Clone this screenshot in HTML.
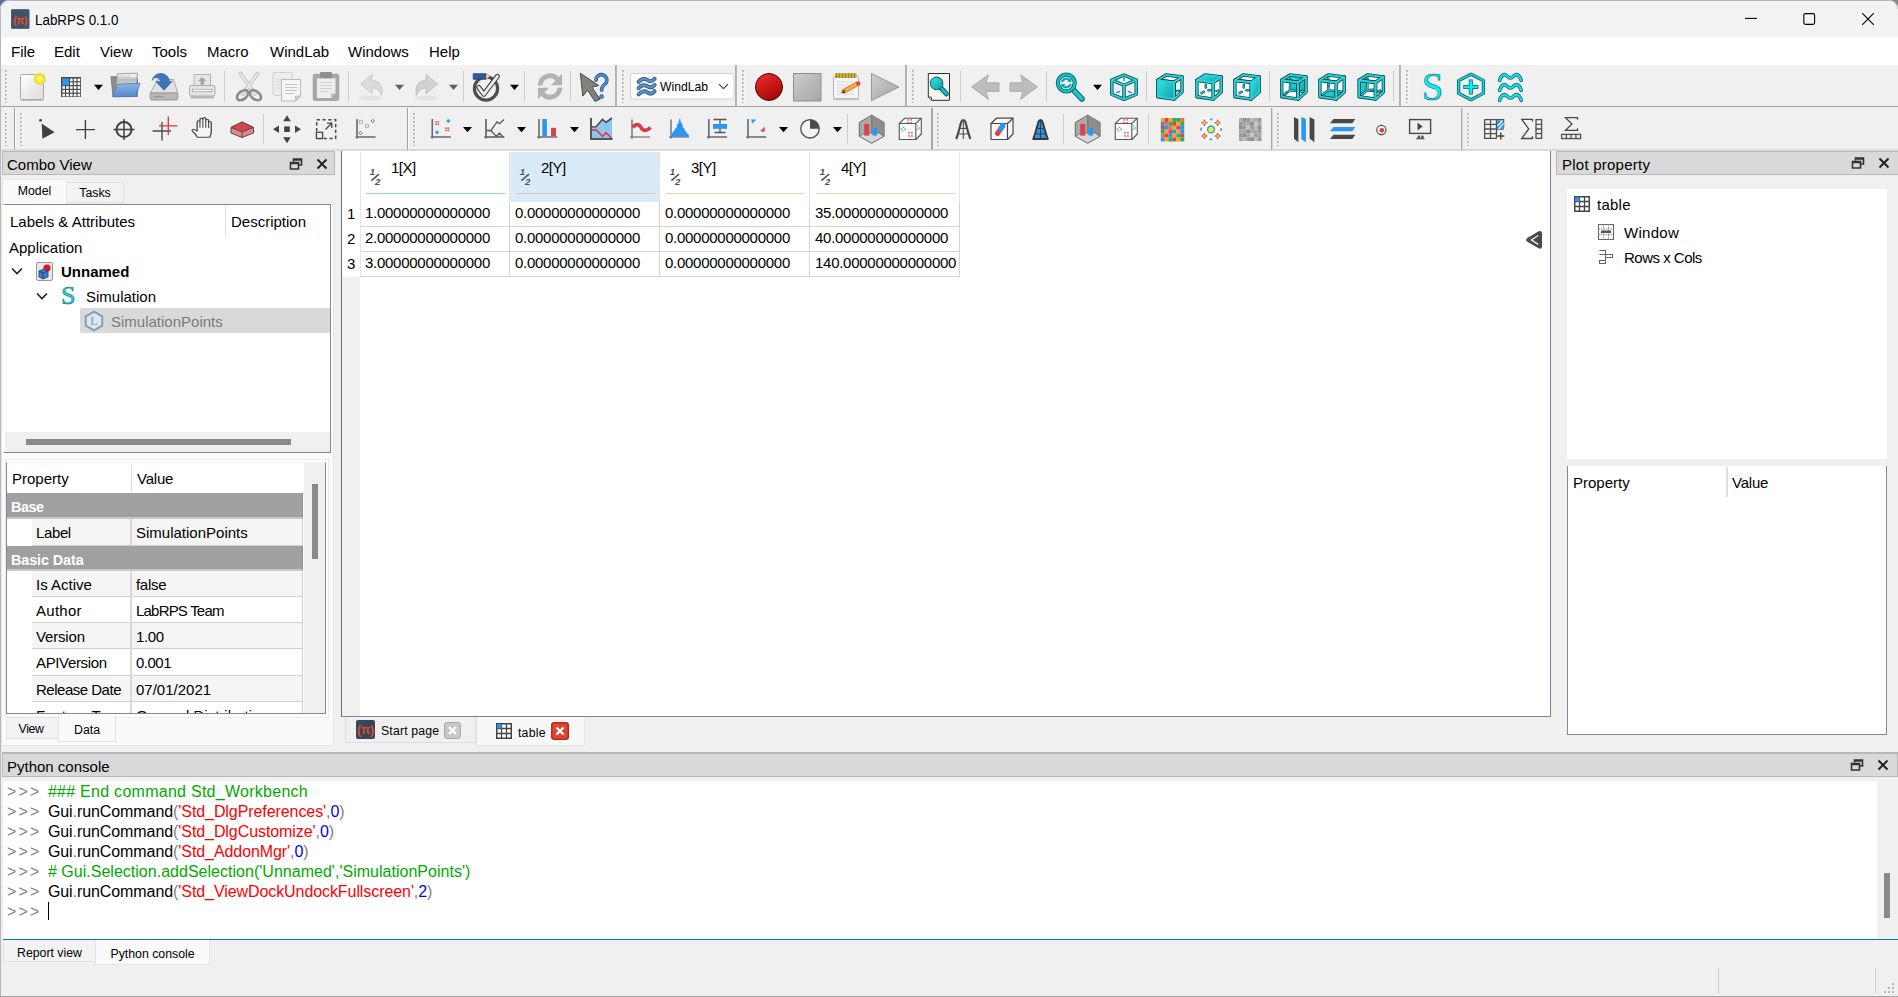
<!DOCTYPE html>
<html lang="en">
<head>
<meta charset="utf-8">
<title>LabRPS 0.1.0</title>
<style>
*{box-sizing:border-box;margin:0;padding:0}
html,body{width:1898px;height:997px;overflow:hidden}
body{position:relative;background:#f0f0f0;font-family:"Liberation Sans",sans-serif;font-size:15px;color:#000;}
.a{position:absolute}
.t{position:absolute;white-space:nowrap;line-height:22px;height:22px}
#title{left:0;top:0;width:1898px;height:38px;background:#f2f3f5;border-bottom:1px solid #f8f9fa}
#menu{left:0;top:38px;width:1898px;height:27px;background:#fff}
#edgeL{left:0;top:8px;width:1px;height:989px;background:#b8b8b8}
#edgeB{left:0;top:996px;width:1898px;height:1px;background:#a8a8a8}
#menu .t{top:3px;font-size:15px}
.hl{position:absolute;height:1px;background:#a0a0a0}
.vl{position:absolute;width:1px;background:#a0a0a0}
.dockt{position:absolute;background:#d9d9d9;border:1px solid #b9b9b9;height:24px}
.dockt .t{left:4px;top:1px}
.frame{position:absolute;background:#fff;border:1px solid #828790}
.tab{position:absolute;font-size:12.300px;text-align:center;line-height:20px}
.tab.sel{background:#fff;border:1px solid #d9d9d9;border-bottom:none}
.tab.un{background:#f3f3f3;border:1px solid #e2e2e2}
.con{position:absolute;left:7px;white-space:pre;font-size:16px;line-height:21px;height:21px;letter-spacing:-.08px}
.num{letter-spacing:-0.27px}
.pr{letter-spacing:2.100px}
.g{color:#808080}.gr{color:#00aa00}.r{color:#ff0000}.b{color:#0000ff}
</style>
</head>
<body>
<!-- TITLE BAR -->
<div id="title" class="a">
  <svg class="a" style="left:11px;top:9px" width="19" height="20" viewBox="0 0 19 20"><rect x="0" y=".3" width="18.300" height="19.400" rx="1" fill="#3e5566"/><rect x=".4" y=".7" width="17.500" height="18.600" rx="1" fill="none" stroke="#4d6475" stroke-width=".8"/><text x="9.200" y="14.600" text-anchor="middle" font-family="Liberation Sans,sans-serif" font-size="11" font-weight="bold" fill="#f24a28" textLength="14" lengthAdjust="spacingAndGlyphs">(π)</text></svg>
  <div class="t" style="left:35px;top:9px;font-size:15.500px;transform-origin:0 50%;transform:scaleX(.865)">LabRPS 0.1.0</div>
  <svg class="a" style="left:1740px;top:8px" width="140" height="22" viewBox="1740 8 140 22" fill="none" stroke="#000" stroke-width="1.100"><path d="M1745 18.400h12"/><rect x="1803.800" y="13.600" width="10.800" height="10.800" rx="1.600"/><path d="M1862.200 13.200l11.600 11.600M1873.800 13.200l-11.600 11.600"/></svg>
  <div class="a" style="left:0;top:0;width:1898px;height:1px;background:#b4b4b4"></div>
  <svg class="a" style="left:0;top:0" width="9" height="9" viewBox="0 0 9 9"><path d="M0 0h9a9 9 0 0 0-9 9z" fill="#5a6f9a"/><path d="M.5 9a8.500 8.500 0 0 1 8.500-8.500" fill="none" stroke="#c8c8cc" stroke-width="1"/></svg>
  <svg class="a" style="left:1889px;top:0" width="9" height="9" viewBox="0 0 9 9"><path d="M9 0h-9a9 9 0 0 1 9 9z" fill="#8a8a8a"/><path d="M8.500 9a8.500 8.500 0 0 0-8.500-8.500" fill="none" stroke="#c8c8cc" stroke-width="1"/></svg>
</div>
<!-- MENU BAR -->
<div id="menu" class="a">
  <div class="t" style="left:11px">File</div>
  <div class="t" style="left:54px">Edit</div>
  <div class="t" style="left:100px">View</div>
  <div class="t" style="left:152px">Tools</div>
  <div class="t" style="left:207px">Macro</div>
  <div class="t" style="left:270px">WindLab</div>
  <div class="t" style="left:348px">Windows</div>
  <div class="t" style="left:429px">Help</div>
</div>
<!-- TOOLBARS -->
<div id="tb1" class="a" style="left:0;top:65px;width:1898px;height:41px"></div>
<div class="hl" style="left:0;top:106px;width:1898px"></div>
<div id="tb2" class="a" style="left:0;top:107px;width:1898px;height:43px"></div>

<!-- TBSVG-START -->
<svg class="a" style="left:0;top:0" width="1898" height="152" viewBox="0 0 1898 152">
<defs>
<linearGradient id="gTeal" x1="0" y1="0" x2="1" y2="1"><stop offset="0" stop-color="#38e2e4"/><stop offset="1" stop-color="#0fa2a8"/></linearGradient>
<linearGradient id="gPage" x1="0" y1="0" x2="1" y2="1"><stop offset="0" stop-color="#ffffff"/><stop offset="1" stop-color="#dcdcdc"/></linearGradient>
<linearGradient id="gRed" x1="0" y1="0" x2=".6" y2="1"><stop offset="0" stop-color="#f23030"/><stop offset="1" stop-color="#a80606"/></linearGradient>
<linearGradient id="gGray" x1="0" y1="0" x2="1" y2="1"><stop offset="0" stop-color="#cdcdcd"/><stop offset="1" stop-color="#a6a6a6"/></linearGradient>
<linearGradient id="gBlue" x1="0" y1="0" x2="0" y2="1"><stop offset="0" stop-color="#8db6e4"/><stop offset="1" stop-color="#5289cc"/></linearGradient>
<linearGradient id="gPaper" x1="0" y1="0" x2="0" y2="1"><stop offset="0" stop-color="#fafafa"/><stop offset=".3" stop-color="#bdbdbd"/><stop offset="1" stop-color="#f2f2f2"/></linearGradient>
<radialGradient id="gGlow"><stop offset="0" stop-color="#fffff0"/><stop offset=".35" stop-color="#f6ee3c"/><stop offset=".8" stop-color="#eadf28" stop-opacity=".85"/><stop offset="1" stop-color="#eadf28" stop-opacity="0"/></radialGradient>
<path id="dd" d="M0 0h9l-4.500 5.300z"/>
<g id="hdl"><path d="M1 0v33" stroke="#b4b4b4" stroke-width="2" stroke-dasharray="2 2"/><path d="M2 1v33" stroke="#fff" stroke-width="1" stroke-dasharray="1 3"/></g>
<g id="tsep"><rect x="-.5" y="0" width="2" height="41" fill="#b2b2b2"/><rect x="1.500" y="0" width="1" height="41" fill="#f8f8f8"/></g>
</defs>
<!-- ===== toolbar 1 ===== -->
<use href="#hdl" x="5" y="70"/>
<!-- new -->
<rect x="20.500" y="74.500" width="23" height="25" rx="1" fill="url(#gPage)" stroke="#a9a9a9"/><path d="M20.500 100.500h23" stroke="#c4c4c4"/>
<circle cx="39.800" cy="79" r="6.800" fill="url(#gGlow)"/>
<!-- grid -->
<rect x="61" y="77" width="20" height="20" fill="#4a4a4a"/>
<g fill="#fff"><rect x="70" y="78.600" width="2.600" height="2.600"/><rect x="73.800" y="78.600" width="2.600" height="2.600"/><rect x="77.600" y="78.600" width="2.600" height="2.600"/><rect x="70" y="82.400" width="2.600" height="2.600"/><rect x="73.800" y="82.400" width="2.600" height="2.600"/><rect x="77.600" y="82.400" width="2.600" height="2.600"/>
<rect x="62.400" y="86.200" width="2.600" height="2.600"/><rect x="66.200" y="86.200" width="2.600" height="2.600"/><rect x="70" y="86.200" width="2.600" height="2.600"/><rect x="73.800" y="86.200" width="2.600" height="2.600"/><rect x="77.600" y="86.200" width="2.600" height="2.600"/>
<rect x="62.400" y="90" width="2.600" height="2.600"/><rect x="66.200" y="90" width="2.600" height="2.600"/><rect x="70" y="90" width="2.600" height="2.600"/><rect x="73.800" y="90" width="2.600" height="2.600"/><rect x="77.600" y="90" width="2.600" height="2.600"/>
<rect x="62.400" y="93.800" width="2.600" height="2.600"/><rect x="66.200" y="93.800" width="2.600" height="2.600"/><rect x="70" y="93.800" width="2.600" height="2.600"/><rect x="73.800" y="93.800" width="2.600" height="2.600"/><rect x="77.600" y="93.800" width="2.600" height="2.600"/></g>
<rect x="62.200" y="78.400" width="6.800" height="6.800" fill="#2a96f0"/>
<use href="#dd" x="94" y="84.800"/>
<!-- open -->
<path d="M111 76.800h6.500l1.500 2h18.500v17.700h-24.500z" fill="#8e8e8e" stroke="#6e6e6e" stroke-width=".8"/>
<path d="M117.500 73.800l20-.6-1.500 19-21.500 2.300z" fill="url(#gPaper)" stroke="#8e8e8e" stroke-width=".8"/><path d="M131 76.200l4.500-.2" stroke="#fff" stroke-width="1"/>
<path d="M116.800 84.300l23.200-1.100-4.300 13.300-23 .4z" fill="url(#gBlue)" stroke="#4a7ab8" stroke-width=".8"/>
<!-- save -->
<path d="M157.800 79.500h15.800l4.200 13.700h-27.600z" fill="#e2e2e2" stroke="#a2a2a2" stroke-width=".9"/>
<rect x="150.200" y="93" width="27.600" height="7" rx="1.400" fill="#b8b8b8" stroke="#909090" stroke-width=".9"/><path d="M153.500 96.700h10" stroke="#9a9a9a" stroke-width="1.600"/>
<path d="M152.200 80.500c.8-5 5.800-8 10.800-6.700 4 1.200 6.300 4.200 6.500 7.600h2.700l-8.200 8.800-8.200-8.800h4.800c-.3-2.400-2.600-4.100-5.100-3.600-1.500.3-2.500 1.200-3.300 2.700z" fill="#3f74b8" stroke="#2f5f9c" stroke-width=".6"/>
<!-- print -->
<rect x="194" y="74.500" width="16.500" height="12" fill="#e6e6e6" stroke="#b0b0b0" stroke-width=".9"/>
<path d="M202.200 77l4.200 4.200h-2.500v3.600h-3.400v-3.600h-2.500z" fill="#a4a4a4"/>
<rect x="189.500" y="85.500" width="25.500" height="10.500" rx="2" fill="#e4e4e4" stroke="#a6a6a6" stroke-width=".9"/>
<rect x="192.500" y="89.300" width="19.500" height="2.400" fill="#fff" stroke="#9a9a9a" stroke-width=".7"/>
<rect x="190.500" y="96" width="23.500" height="2.600" rx="1" fill="#b6b6b6"/>
<rect x="224" y="71" width="1" height="30" fill="#cdcdcd"/>
<!-- cut -->
<path d="M240.500 73.500l14.500 20.500M257.500 73.500l-14.500 20.500" stroke="#bdbdbd" stroke-width="3.600" stroke-linecap="round"/>
<path d="M240.500 73.500l14.500 20.500M257.500 73.500l-14.500 20.500" stroke="#ececec" stroke-width="1.800" stroke-linecap="round"/>
<ellipse cx="242.600" cy="95.200" rx="6.400" ry="4" transform="rotate(-38 242.600 95.200)" fill="none" stroke="#8c8c8c" stroke-width="2.600"/>
<ellipse cx="255.400" cy="95.200" rx="6.400" ry="4" transform="rotate(38 255.400 95.200)" fill="none" stroke="#8c8c8c" stroke-width="2.600"/>
<!-- copy -->
<rect x="273" y="72.500" width="19" height="23" rx="1" fill="#ededed" stroke="#d2d2d2"/>
<path d="M276 79h9M276 82h9M276 85h9M276 88h9" stroke="#dadada"/>
<path d="M281.500 79.500h19v16.500l-5 5h-14z" fill="#f6f6f6" stroke="#b9b9b9"/>
<path d="M285 84.500h12.500M285 87.500h12.500M285 90.500h12.500M285 93.500h9" stroke="#c4c4c4" stroke-width="1.200"/><path d="M300.500 96l-5 5v-5z" fill="#d0d0d0" stroke="#b4b4b4" stroke-width=".7"/>
<!-- paste -->
<rect x="313.300" y="74.300" width="25.400" height="26" rx="1.500" fill="#a9a9a9" stroke="#9b9b9b"/>
<rect x="320" y="72" width="12" height="6" rx="1" fill="#8f8f8f"/>
<path d="M317 78.500h18.500v15l-4.500 4.500h-14z" fill="#eeeeee"/>
<path d="M320 82.500h12M320 85.500h12M320 88.500h12M320 91.500h8" stroke="#cfcfcf" stroke-width="1.200"/><path d="M335.500 93.500l-4.500 4.500v-4.500z" fill="#bdbdbd"/>
<rect x="348" y="71" width="1" height="30" fill="#cdcdcd"/>
<!-- undo / redo -->
<ellipse cx="371" cy="98" rx="12" ry="2.600" fill="#000" opacity=".05"/>
<path d="M360.500 84l11.500-9.500v6c8 0 11.500 6.500 9.500 15-1.500-5-4.500-7.500-9.500-7.500v5.500z" fill="#dbdbdb" stroke="#c6c6c6" stroke-width=".9"/>
<use href="#dd" x="395" y="84.800" fill="#5e5e68"/>
<ellipse cx="427" cy="98" rx="12" ry="2.600" fill="#000" opacity=".05"/>
<path d="M437.500 84l-11.500-9.500v6c-8 0-11.500 6.500-9.500 15 1.500-5 4.500-7.500 9.500-7.500v5.500z" fill="#d2d2d2" stroke="#bcbcbc" stroke-width=".9"/>
<use href="#dd" x="449" y="84.800" fill="#5e5e68"/>
<rect x="463" y="71" width="1" height="30" fill="#cdcdcd"/>
<!-- check -->
<circle cx="486" cy="88.500" r="11.600" fill="none" stroke="#4c4f4c" stroke-width="3.200"/>
<path d="M473.200 73.700h12.800v5.600h-12.800z" fill="#2c5c9c" stroke="#1c3f70" stroke-width=".7"/><path d="M486 73.700l4 2.800-4 2.800z" fill="#e8dcc0" stroke="#777" stroke-width=".5"/>
<path d="M478.800 87.500l5 6.800 13.600-18" fill="none" stroke="#3e3e3e" stroke-width="5" stroke-linecap="round" stroke-linejoin="round"/>
<path d="M478.800 87.500l5 6.800 13.600-18" fill="none" stroke="#ececec" stroke-width="2.800" stroke-linecap="round" stroke-linejoin="round"/>
<use href="#dd" x="510" y="84.800"/>
<rect x="524" y="71" width="1" height="30" fill="#cdcdcd"/>
<!-- refresh -->
<g fill="none" stroke="#b2b2b2" stroke-width="4.800"><path d="M540.200 85.500a9.800 9.800 0 0 1 17-6.500"/><path d="M559.800 87.500a9.800 9.800 0 0 1-17 6.500"/></g>
<path d="M562 73.800v11.400h-11z" fill="#b2b2b2"/><path d="M538 99.200v-11.400h11z" fill="#b2b2b2"/>
<rect x="570" y="71" width="1" height="30" fill="#cdcdcd"/>
<!-- whatsthis -->
<path d="M580.300 73.200l18.400 12.300-6.700 1.700 8 12.100-5 2.200-7.400-11.200-4.800 5.800z" fill="#82827c" stroke="#474743" stroke-width="1"/>
<path d="M596 80.200a5.400 5.400 0 1 1 8.400 4.400c-2.100 1.500-2.800 2.800-2.800 5.600" fill="none" stroke="#245a9a" stroke-width="3.600" stroke-linecap="round"/>
<path d="M596 80.200a5.400 5.400 0 1 1 8.400 4.400c-2.100 1.500-2.800 2.800-2.800 5.600" fill="none" stroke="#4e8ad0" stroke-width="2" stroke-linecap="round"/>
<circle cx="601.600" cy="96.600" r="2" fill="#4e8ad0" stroke="#245a9a" stroke-width=".8"/>
<use href="#tsep" x="615.500" y="65"/>
<use href="#hdl" x="622" y="70"/>
<!-- combo -->
<rect x="630.500" y="73.500" width="103.500" height="25.500" rx="2" fill="#fff" stroke="#d2d2d2"/>
<g fill="none" stroke="#30588e" stroke-width="4" stroke-linecap="round"><path d="M638.600 82.0c2.600-3.600 6.400-3.600 8.600-2 2.400 1.700 5.200 1.600 7.400-1.200"/><path d="M638.600 88.2c2.600-3.600 6.400-3.600 8.600-2 2.400 1.700 5.200 1.600 7.400-1.200"/><path d="M638.600 94.4c2.600-3.600 6.400-3.600 8.600-2 2.400 1.700 5.200 1.600 7.400-1.200"/></g><g fill="none" stroke="#5f8fc6" stroke-width="2.200" stroke-linecap="round"><path d="M638.600 82.0c2.600-3.600 6.400-3.600 8.600-2 2.400 1.700 5.200 1.600 7.400-1.200"/><path d="M638.600 88.2c2.600-3.600 6.400-3.600 8.600-2 2.400 1.700 5.200 1.600 7.400-1.200"/><path d="M638.600 94.4c2.600-3.600 6.400-3.600 8.600-2 2.400 1.700 5.200 1.600 7.400-1.200"/></g>
<text x="660" y="91" font-family="Liberation Sans,sans-serif" font-size="12.200" fill="#000">WindLab</text>
<path d="M719 84.200l4.500 4.500 4.500-4.500" fill="none" stroke="#444" stroke-width="1.200"/>
<use href="#tsep" x="735.500" y="65"/>
<use href="#hdl" x="742" y="70"/>
<!-- record / stop / edit / play -->
<circle cx="769" cy="87" r="13.500" fill="url(#gRed)" stroke="#4a0505" stroke-width="1"/>
<rect x="793.500" y="73.500" width="27.500" height="27.500" fill="url(#gGray)" stroke="#8e8e8e"/>
<rect x="833.500" y="76" width="25" height="23" rx="1.500" fill="#f4f4f4" stroke="#b6b6b6"/><rect x="833" y="98" width="26" height="2.300" rx="1" fill="#c2c2c2"/>
<rect x="835" y="73.200" width="21.500" height="4.800" fill="#c9ad3e"/><path d="M836.500 73v5M839.500 73v5M842.500 73v5M845.500 73v5M848.500 73v5M851.500 73v5M854.500 73v5" stroke="#9c842a" stroke-width="1"/>
<path d="M837 82h17M837 85h17M837 88h17M837 91h17M837 94h17" stroke="#dcdcdc"/>
<path d="M842.500 92l15.500-8.500" stroke="#c97d18" stroke-width="4.600"/><path d="M843.500 91.500l14.500-8" stroke="#f0b04c" stroke-width="2.600"/><path d="M840.600 93.300l3.600-3.500 1.400 2.700z" fill="#5a4020"/><circle cx="858.300" cy="83.400" r="2.200" fill="#e04848"/>
<path d="M871.500 73.500l27.500 13.500-27.500 13.500z" fill="url(#gGray)" stroke="#969696"/>
<use href="#tsep" x="905.500" y="65"/>
<use href="#hdl" x="912" y="70"/>
<!-- zoom doc -->
<path d="M928.300 73.500h21.200v26.800h-18l-3.200-3.200z" fill="#f3f5f0" stroke="#2e2e2e" stroke-width="1"/><path d="M928.300 97.100h3.200v3.200" fill="#d0d0d0" stroke="#2e2e2e" stroke-width=".8"/>
<path d="M940.500 87.500l6 6.500" stroke="#0b5d63" stroke-width="4.800" stroke-linecap="round"/><path d="M940.500 87.500l6 6.500" stroke="#16bcc4" stroke-width="3" stroke-linecap="round"/>
<circle cx="936.600" cy="83.400" r="6.300" fill="url(#gTeal)" stroke="#0b5d63" stroke-width="1"/>
<rect x="960" y="71" width="1" height="30" fill="#cdcdcd"/>
<!-- back / forward -->
<path d="M971.500 86.800l17-12-2.500 8h13v8.600h-13l2.500 8z" fill="#bdbdbd" stroke="#a7a7a7" stroke-width=".9"/>
<path d="M1037.500 86.800l-17-12 2.500 8h-13v8.600h13l-2.500 8z" fill="#bdbdbd" stroke="#a7a7a7" stroke-width=".9"/>
<rect x="1046" y="71" width="1" height="30" fill="#cdcdcd"/>
<!-- zoom refresh -->
<path d="M1073 89.500l9 9.500" stroke="#0b5d63" stroke-width="5.600" stroke-linecap="round"/><path d="M1073 89.500l9 9.500" stroke="#1ccad0" stroke-width="3.600" stroke-linecap="round"/>
<circle cx="1066.300" cy="83" r="8.400" fill="#f4fbfb" stroke="#0b5d63" stroke-width="4.200"/><circle cx="1066.300" cy="83" r="8.400" fill="none" stroke="#16bcc4" stroke-width="2.600"/>
<g fill="none" stroke="#0fa8b0" stroke-width="2.200"><path d="M1062 82.200a4.400 4.400 0 0 1 7.600-2"/><path d="M1070.600 83.800a4.400 4.400 0 0 1-7.600 2"/></g><path d="M1071.400 77.600v4.400h-4.400zM1061.200 88.400v-4.400h4.400z" fill="#0fa8b0"/>
<use href="#dd" x="1093" y="84.800"/>
<!-- cube iso -->
<g fill="none" stroke-linejoin="round">
<path d="M1124 75l12.200 5.100v14.200l-12.200 5.100-12.200-5.100v-14.200zM1111.800 80.100l12.200 5.100 12.200-5.100M1124 85.200v14.200" stroke="#074549" stroke-width="3.400"/>
<path d="M1124 75l12.200 5.100v14.200l-12.200 5.100-12.200-5.100v-14.200zM1111.800 80.100l12.200 5.100 12.200-5.100M1124 85.200v14.200" stroke="#27d3d8" stroke-width="1.800"/>
<path d="M1124 76.500v4M1117 92.500l2.500-1M1131 92.500l-2.500-1" stroke="#12aab2" stroke-width="1.600" stroke-linecap="round"/></g>
<rect x="1146" y="71" width="1" height="30" fill="#cdcdcd"/>
<g stroke-linejoin="round"><polygon points="1157.7,80.3 1166.0,75.0 1182.0,76.9 1182.0,92.0 1174.1,99.1 1157.7,96.7" fill="#fff"/><path d="M1176.8 91.3L1178.8 90.8" stroke="#0a555a" stroke-width="2.500" stroke-linecap="round"/><path d="M1176.8 91.3L1178.8 90.8" stroke="#1cc4cc" stroke-width="1.300" stroke-linecap="round"/><polygon points="1157.7,80.3 1174.1,82.3 1174.1,99.1 1157.7,96.7" fill="url(#gTeal)" stroke="#074549" stroke-width="3.4"/><polygon points="1157.7,80.3 1166.0,75.0 1182.0,76.9 1174.1,82.3" fill="none" stroke="#074549" stroke-width="3.4"/><polygon points="1174.1,82.3 1182.0,76.9 1182.0,92.0 1174.1,99.1" fill="none" stroke="#074549" stroke-width="3.4"/><polygon points="1157.7,80.3 1174.1,82.3 1174.1,99.1 1157.7,96.7" fill="url(#gTeal)" stroke="#27d3d8" stroke-width="1.8"/><polygon points="1157.7,80.3 1166.0,75.0 1182.0,76.9 1174.1,82.3" fill="none" stroke="#27d3d8" stroke-width="1.8"/><polygon points="1174.1,82.3 1182.0,76.9 1182.0,92.0 1174.1,99.1" fill="none" stroke="#27d3d8" stroke-width="1.8"/></g>
<g stroke-linejoin="round"><polygon points="1196.9,80.3 1205.2,75.0 1221.2,76.9 1221.2,92.0 1213.3,99.1 1196.9,96.7" fill="#fff"/><path d="M1205.8 84.8L1205.8 87.5" stroke="#0a555a" stroke-width="2.500" stroke-linecap="round"/><path d="M1205.8 84.8L1205.8 87.5" stroke="#1cc4cc" stroke-width="1.300" stroke-linecap="round"/><path d="M1201.6 93.1L1203.8 91.7" stroke="#0a555a" stroke-width="2.500" stroke-linecap="round"/><path d="M1201.6 93.1L1203.8 91.7" stroke="#1cc4cc" stroke-width="1.300" stroke-linecap="round"/><path d="M1208.5 90.2L1210.4 90.2" stroke="#0a555a" stroke-width="2.500" stroke-linecap="round"/><path d="M1208.5 90.2L1210.4 90.2" stroke="#1cc4cc" stroke-width="1.300" stroke-linecap="round"/><path d="M1216.4 91.1L1218.2 90.6" stroke="#0a555a" stroke-width="2.500" stroke-linecap="round"/><path d="M1216.4 91.1L1218.2 90.6" stroke="#1cc4cc" stroke-width="1.300" stroke-linecap="round"/><polygon points="1196.9,80.3 1213.3,82.3 1213.3,99.1 1196.9,96.7" fill="none" stroke="#074549" stroke-width="3.4"/><polygon points="1196.9,80.3 1205.2,75.0 1221.2,76.9 1213.3,82.3" fill="url(#gTeal)" stroke="#074549" stroke-width="3.4"/><polygon points="1213.3,82.3 1221.2,76.9 1221.2,92.0 1213.3,99.1" fill="none" stroke="#074549" stroke-width="3.4"/><polygon points="1196.9,80.3 1213.3,82.3 1213.3,99.1 1196.9,96.7" fill="none" stroke="#27d3d8" stroke-width="1.8"/><polygon points="1196.9,80.3 1205.2,75.0 1221.2,76.9 1213.3,82.3" fill="url(#gTeal)" stroke="#27d3d8" stroke-width="1.8"/><polygon points="1213.3,82.3 1221.2,76.9 1221.2,92.0 1213.3,99.1" fill="none" stroke="#27d3d8" stroke-width="1.8"/></g>
<g stroke-linejoin="round"><polygon points="1234.9,80.3 1243.2,75.0 1259.2,76.9 1259.2,92.0 1251.3,99.1 1234.9,96.7" fill="#fff"/><path d="M1243.8 84.8L1243.8 87.5" stroke="#0a555a" stroke-width="2.500" stroke-linecap="round"/><path d="M1243.8 84.8L1243.8 87.5" stroke="#1cc4cc" stroke-width="1.300" stroke-linecap="round"/><path d="M1239.6 93.1L1241.8 91.7" stroke="#0a555a" stroke-width="2.500" stroke-linecap="round"/><path d="M1239.6 93.1L1241.8 91.7" stroke="#1cc4cc" stroke-width="1.300" stroke-linecap="round"/><path d="M1246.5 90.2L1248.4 90.2" stroke="#0a555a" stroke-width="2.500" stroke-linecap="round"/><path d="M1246.5 90.2L1248.4 90.2" stroke="#1cc4cc" stroke-width="1.300" stroke-linecap="round"/><polygon points="1234.9,80.3 1251.3,82.3 1251.3,99.1 1234.9,96.7" fill="none" stroke="#074549" stroke-width="3.4"/><polygon points="1234.9,80.3 1243.2,75.0 1259.2,76.9 1251.3,82.3" fill="none" stroke="#074549" stroke-width="3.4"/><polygon points="1251.3,82.3 1259.2,76.9 1259.2,92.0 1251.3,99.1" fill="url(#gTeal)" stroke="#074549" stroke-width="3.4"/><polygon points="1234.9,80.3 1251.3,82.3 1251.3,99.1 1234.9,96.7" fill="none" stroke="#27d3d8" stroke-width="1.8"/><polygon points="1234.9,80.3 1243.2,75.0 1259.2,76.9 1251.3,82.3" fill="none" stroke="#27d3d8" stroke-width="1.8"/><polygon points="1251.3,82.3 1259.2,76.9 1259.2,92.0 1251.3,99.1" fill="url(#gTeal)" stroke="#27d3d8" stroke-width="1.8"/></g>
<rect x="1269" y="71" width="1" height="30" fill="#cdcdcd"/>
<g stroke-linejoin="round"><polygon points="1281.7,80.3 1290.0,75.0 1306.0,76.9 1306.0,92.0 1298.1,99.1 1281.7,96.7" fill="#fff"/><polygon points="1290.0,75.0 1306.0,76.9 1306.0,92.0 1290.0,90.2" fill="url(#gTeal)" stroke="#0b5d63" stroke-width=".7"/><path d="M1290.0 75.0L1290.0 90.2L1281.7 96.7M1290.0 90.2L1306.0 92.0" fill="none" stroke="#0a555a" stroke-width="2.400"/><path d="M1290.0 75.0L1290.0 90.2L1281.7 96.7M1290.0 90.2L1306.0 92.0" fill="none" stroke="#22c8ce" stroke-width="1.200"/><path d="M1284.4 94.4L1286.2 93.1" stroke="#0a555a" stroke-width="2.500" stroke-linecap="round"/><path d="M1284.4 94.4L1286.2 93.1" stroke="#1cc4cc" stroke-width="1.300" stroke-linecap="round"/><polygon points="1281.7,80.3 1298.1,82.3 1298.1,99.1 1281.7,96.7" fill="none" stroke="#074549" stroke-width="3.4"/><polygon points="1281.7,80.3 1290.0,75.0 1306.0,76.9 1298.1,82.3" fill="none" stroke="#074549" stroke-width="3.4"/><polygon points="1298.1,82.3 1306.0,76.9 1306.0,92.0 1298.1,99.1" fill="none" stroke="#074549" stroke-width="3.4"/><polygon points="1281.7,80.3 1298.1,82.3 1298.1,99.1 1281.7,96.7" fill="none" stroke="#27d3d8" stroke-width="1.8"/><polygon points="1281.7,80.3 1290.0,75.0 1306.0,76.9 1298.1,82.3" fill="none" stroke="#27d3d8" stroke-width="1.8"/><polygon points="1298.1,82.3 1306.0,76.9 1306.0,92.0 1298.1,99.1" fill="none" stroke="#27d3d8" stroke-width="1.8"/></g>
<g stroke-linejoin="round"><polygon points="1319.9,80.3 1328.2,75.0 1344.2,76.9 1344.2,92.0 1336.3,99.1 1319.9,96.7" fill="#fff"/><polygon points="1319.9,96.7 1328.2,90.2 1344.2,92.0 1336.3,99.1" fill="url(#gTeal)" stroke="#0b5d63" stroke-width=".7"/><path d="M1328.2 75.0L1328.2 90.2L1319.9 96.7M1328.2 90.2L1344.2 92.0" fill="none" stroke="#0a555a" stroke-width="2.400"/><path d="M1328.2 75.0L1328.2 90.2L1319.9 96.7M1328.2 90.2L1344.2 92.0" fill="none" stroke="#22c8ce" stroke-width="1.200"/><path d="M1328.8 83.0L1328.8 85.7" stroke="#0a555a" stroke-width="2.500" stroke-linecap="round"/><path d="M1328.8 83.0L1328.8 85.7" stroke="#1cc4cc" stroke-width="1.300" stroke-linecap="round"/><polygon points="1319.9,80.3 1336.3,82.3 1336.3,99.1 1319.9,96.7" fill="none" stroke="#074549" stroke-width="3.4"/><polygon points="1319.9,80.3 1328.2,75.0 1344.2,76.9 1336.3,82.3" fill="none" stroke="#074549" stroke-width="3.4"/><polygon points="1336.3,82.3 1344.2,76.9 1344.2,92.0 1336.3,99.1" fill="none" stroke="#074549" stroke-width="3.4"/><polygon points="1319.9,80.3 1336.3,82.3 1336.3,99.1 1319.9,96.7" fill="none" stroke="#27d3d8" stroke-width="1.8"/><polygon points="1319.9,80.3 1328.2,75.0 1344.2,76.9 1336.3,82.3" fill="none" stroke="#27d3d8" stroke-width="1.8"/><polygon points="1336.3,82.3 1344.2,76.9 1344.2,92.0 1336.3,99.1" fill="none" stroke="#27d3d8" stroke-width="1.8"/></g>
<g stroke-linejoin="round"><polygon points="1359.1,80.3 1367.4,75.0 1383.4,76.9 1383.4,92.0 1375.5,99.1 1359.1,96.7" fill="#fff"/><polygon points="1359.1,80.3 1367.4,75.0 1367.4,90.2 1359.1,96.7" fill="url(#gTeal)" stroke="#0b5d63" stroke-width=".7"/><path d="M1367.4 75.0L1367.4 90.2L1359.1 96.7M1367.4 90.2L1383.4 92.0" fill="none" stroke="#0a555a" stroke-width="2.400"/><path d="M1367.4 75.0L1367.4 90.2L1359.1 96.7M1367.4 90.2L1383.4 92.0" fill="none" stroke="#22c8ce" stroke-width="1.200"/><path d="M1370.8 89.7L1373.0 89.7" stroke="#0a555a" stroke-width="2.500" stroke-linecap="round"/><path d="M1370.8 89.7L1373.0 89.7" stroke="#1cc4cc" stroke-width="1.300" stroke-linecap="round"/><path d="M1378.4 91.1L1380.2 90.6" stroke="#0a555a" stroke-width="2.500" stroke-linecap="round"/><path d="M1378.4 91.1L1380.2 90.6" stroke="#1cc4cc" stroke-width="1.300" stroke-linecap="round"/><polygon points="1359.1,80.3 1375.5,82.3 1375.5,99.1 1359.1,96.7" fill="none" stroke="#074549" stroke-width="3.4"/><polygon points="1359.1,80.3 1367.4,75.0 1383.4,76.9 1375.5,82.3" fill="none" stroke="#074549" stroke-width="3.4"/><polygon points="1375.5,82.3 1383.4,76.9 1383.4,92.0 1375.5,99.1" fill="none" stroke="#074549" stroke-width="3.4"/><polygon points="1359.1,80.3 1375.5,82.3 1375.5,99.1 1359.1,96.7" fill="none" stroke="#27d3d8" stroke-width="1.8"/><polygon points="1359.1,80.3 1367.4,75.0 1383.4,76.9 1375.5,82.3" fill="none" stroke="#27d3d8" stroke-width="1.8"/><polygon points="1375.5,82.3 1383.4,76.9 1383.4,92.0 1375.5,99.1" fill="none" stroke="#27d3d8" stroke-width="1.8"/></g>
<rect x="1393" y="71" width="1" height="30" fill="#cdcdcd"/>
<use href="#tsep" x="1399.500" y="65"/>
<use href="#hdl" x="1406" y="70"/>
<text x="1421.800" y="99.800" font-family="Liberation Serif,serif" font-size="39" fill="#02f2fa" stroke="#0b6268" stroke-width=".55">S</text>
<polygon points="1471,74.300 1483.400,80.600 1483.400,93.400 1471,99.700 1458.600,93.400 1458.600,80.600" fill="none" stroke="#0b6268" stroke-width="3.300" stroke-linejoin="round"/>
<polygon points="1471,74.300 1483.400,80.600 1483.400,93.400 1471,99.700 1458.600,93.400 1458.600,80.600" fill="none" stroke="#19d2da" stroke-width="1.700" stroke-linejoin="round"/>
<path d="M1470.800 79.500v15M1463.300 87h15" stroke="#0b6268" stroke-width="4"/><path d="M1470.800 80.200v13.600M1464 87h13.600" stroke="#04eef6" stroke-width="2.600"/>
<path d="M1499.600 80.4C1500.800 76.9 1502.200 74.6 1504.200 74.6C1506.800 74.6 1507.800 78.0 1510.400 78.0C1513 78.0 1514 74.6 1516.600 74.6C1518.600 74.6 1520 76.9 1521.200 80.4" fill="none" stroke="#0b6268" stroke-width="3.600" stroke-linecap="round"/><path d="M1499.600 80.4C1500.800 76.9 1502.200 74.6 1504.200 74.6C1506.800 74.6 1507.800 78.0 1510.400 78.0C1513 78.0 1514 74.6 1516.600 74.6C1518.600 74.6 1520 76.9 1521.200 80.4" fill="none" stroke="#0ee4ec" stroke-width="2.100" stroke-linecap="round"/>
<path d="M1499.600 90.4C1500.800 86.9 1502.200 84.6 1504.200 84.6C1506.800 84.6 1507.800 88.0 1510.400 88.0C1513 88.0 1514 84.6 1516.600 84.6C1518.600 84.6 1520 86.9 1521.200 90.4" fill="none" stroke="#0b6268" stroke-width="3.600" stroke-linecap="round"/><path d="M1499.600 90.4C1500.800 86.9 1502.200 84.6 1504.200 84.6C1506.800 84.6 1507.800 88.0 1510.400 88.0C1513 88.0 1514 84.6 1516.600 84.6C1518.600 84.6 1520 86.9 1521.200 90.4" fill="none" stroke="#0ee4ec" stroke-width="2.100" stroke-linecap="round"/>
<path d="M1499.600 100.4C1500.800 96.9 1502.200 94.6 1504.200 94.6C1506.800 94.6 1507.800 98.0 1510.400 98.0C1513 98.0 1514 94.6 1516.600 94.6C1518.600 94.6 1520 96.9 1521.200 100.4" fill="none" stroke="#0b6268" stroke-width="3.600" stroke-linecap="round"/><path d="M1499.600 100.4C1500.800 96.9 1502.200 94.6 1504.200 94.6C1506.800 94.6 1507.800 98.0 1510.400 98.0C1513 98.0 1514 94.6 1516.600 94.6C1518.600 94.6 1520 96.9 1521.200 100.4" fill="none" stroke="#0ee4ec" stroke-width="2.100" stroke-linecap="round"/>
<!-- ===== toolbar 2 ===== -->
<use href="#hdl" x="5" y="113"/>
<rect x="14" y="108" width="1" height="42" fill="#a0a0a0"/><rect x="15" y="108" width="1" height="42" fill="#fdfdfd"/>
<use href="#hdl" x="20" y="113"/>
<!-- pointer -->
<circle cx="40.500" cy="120.300" r="1.400" fill="#404040"/><path d="M41.700 123.600l12.800 8.600-12.100 6.500z" fill="#404040"/>
<path d="M85.400 120v19M76 129.600h19" stroke="#404040" stroke-width="1.400"/>
<circle cx="124" cy="129.600" r="7.500" fill="none" stroke="#404040" stroke-width="2"/><path d="M124 119v21M113.500 129.600h21" stroke="#404040" stroke-width="1.500"/>
<path d="M162 122v18.500M152.500 131h18.500" stroke="#4a4a4a" stroke-width="1.400"/><path d="M168.300 116.500v18.500M159 125.900h18.500" stroke="#e0343c" stroke-width="1.300"/>
<!-- hand -->
<g transform="translate(192 0) scale(1.220 1) translate(-192 0)"><path d="M196.500 137.200c-1.200-2.300-2.700-4.600-4.200-6.400-.7-.9.400-2 1.500-1.400l2.400 1.600v-9.200c0-1.500 2.300-1.500 2.300 0v-2.300c0-1.500 2.400-1.500 2.400 0v-.8c0-1.500 2.400-1.500 2.400 0v1.600c0-1.500 2.300-1.500 2.300 0v2.300c0-1.400 2.200-1.400 2.200 0v9.200c0 2-.6 3.800-1.200 5.400z" fill="#f4f4f4" stroke="#4a4a4a" stroke-width="1.100" stroke-linejoin="round"/>
<path d="M198.500 121.800v6M200.900 119.500v8.300M203.300 120.300v7.500M205.600 122.600v5.400" stroke="#4a4a4a" stroke-width=".9"/></g>
<!-- red box -->
<path d="M231 127.500l11-5.500 11.500 5.500v5.500l-11.500 4.500-11-4.500z" fill="#e2858a" stroke="#4e4e4e" stroke-width="1"/><path d="M231 127.500l11-5.500 11.500 5.500-11.500 4.300z" fill="#d9434b" stroke="#4e4e4e" stroke-width="1" stroke-linejoin="round"/><path d="M242 131.800v5.700" stroke="#4e4e4e"/>
<rect x="263" y="114" width="1" height="30" fill="#cdcdcd"/>
<!-- move -->
<g fill="#444"><rect x="284.200" y="126.400" width="5.600" height="5.600"/><path d="M287 115.200l3.800 6h-7.600zM287 143.200l3.800-6h-7.600zM273 129.200l6-3.800v7.600zM301 129.200l-6-3.800v7.600z"/></g>
<!-- zoom rect -->
<rect x="316.700" y="119.800" width="19" height="18.600" fill="none" stroke="#484848" stroke-width="1.500" stroke-dasharray="3.200 2.600"/>
<rect x="316.400" y="132.300" width="6.200" height="6.200" fill="#f0f0f0" stroke="#484848" stroke-width="1.300"/>
<path d="M325.500 129.500l6-6M327 123.200h4.800v4.800" fill="none" stroke="#484848" stroke-width="1.300"/>
<!-- scatter gray -->
<path d="M357 119v19.500M355.500 137h20" stroke="#6a6a6a" stroke-width="1.600"/>
<g fill="none" stroke="#6a6a6a" stroke-width=".9"><rect x="359.400" y="120.400" width="3" height="3" stroke-dasharray="1 1"/><rect x="365.400" y="124.400" width="3" height="3" stroke-dasharray="1 1"/><path d="M372.800 119.300l1.700 1.700-1.700 1.700-1.700-1.700zM360.500 131.500l1.700 1.700-1.700 1.700-1.700-1.700z"/></g>
<rect x="407" y="108" width="1" height="42" fill="#a0a0a0"/><rect x="408" y="108" width="1" height="42" fill="#fdfdfd"/>
<use href="#hdl" x="413" y="113"/>
<!-- scatter colour -->
<path d="M432.300 119v19.500M430.800 137h20" stroke="#6a6a6a" stroke-width="1.600"/>
<g fill="#e0404a"><rect x="435.300" y="121.200" width="1.500" height="1.500"/><rect x="437.600" y="121.200" width="1.500" height="1.500"/><rect x="435.300" y="123.500" width="1.500" height="1.500"/><rect x="437.600" y="123.500" width="1.500" height="1.500"/><rect x="445.300" y="127.400" width="1.500" height="1.500"/><rect x="447.600" y="127.400" width="1.500" height="1.500"/><rect x="445.300" y="129.700" width="1.500" height="1.500"/><rect x="447.600" y="129.700" width="1.500" height="1.500"/></g>
<path d="M448.300 118.800l2.100 2.100-2.100 2.100-2.100-2.100zM437 130.200l2.100 2.100-2.100 2.100-2.100-2.100z" fill="#2a9df4"/>
<use href="#dd" x="463" y="127"/>
<!-- line -->
<path d="M486 119v19.500M484.400 137h20" stroke="#5a5a5a" stroke-width="1.600"/>
<path d="M486.500 130.500l4.500-.2 6-8.500 2.500 2 4.500-4.300M486.500 130.500l4.500.3 5.500 5.700 3-3.500 3.500 4" fill="none" stroke="#5a5a5a" stroke-width="1.300" stroke-linejoin="round"/>
<use href="#dd" x="517" y="127"/>
<!-- bar -->
<path d="M539 119v19.500M537.300 137h20" stroke="#6a6a6a" stroke-width="1.600"/>
<rect x="542.300" y="119" width="4.600" height="17.200" fill="#2a96f0"/><rect x="551" y="127.800" width="5" height="8.400" fill="#d9434f"/>
<use href="#dd" x="570" y="127"/>
<!-- area -->
<path d="M591 127l5-.3 6.500-7.300 3.500 3 6-4.400v20.500h-21z" fill="#8cc6f0"/>
<path d="M591 127l5-.3 6.500-7.300 3.500 3 6-4.400" fill="none" stroke="#4a4a4a" stroke-width="1.600"/>
<path d="M591.500 130h5l6 6.500 3.500-3.800 6 6" fill="none" stroke="#e0343c" stroke-width="1.500"/>
<path d="M591 118v21M590 139h22.500" stroke="#555" stroke-width="2"/>
<!-- red wave -->
<path d="M632 119.500v19M630.200 137h20" stroke="#5a5a5a" stroke-width="1.200"/>
<path d="M633 127.500c2.500-3.800 6-3.800 8 0 2.200 3.800 6 3.800 9.500 0" fill="none" stroke="#dc3a48" stroke-width="3.600"/>
<!-- histogram -->
<path d="M671 119.500v19M669.200 137h20" stroke="#5a5a5a" stroke-width="1.200"/>
<path d="M671.800 136.500v-3l1.200-.4.800-2 1-.2.800-2.600 1 .4 1-4.600 1-.6 1.200-4.800 1 4.200 1 .6 1 4.200 1.200.8.800 2.800 1 .2.800 2 1.600.4.200 2.600z" fill="#2a96f0" stroke="#2a96f0" stroke-width=".6" stroke-linejoin="round"/>
<!-- error bars -->
<path d="M708.800 119v19.500M707 137h20" stroke="#6a6a6a" stroke-width="1.600"/>
<path d="M720 119.500v13M713.500 119.500h13M714.500 132.500h11" stroke="#555" stroke-width="1.300"/><rect x="713" y="124" width="14" height="4.800" fill="#2a96f0"/>
<!-- axes triangles -->
<path d="M748 119v19.500M746.300 137h20" stroke="#6a6a6a" stroke-width="1.600"/>
<path d="M751.200 119.200l5.200.6-4.400 4z" fill="#2a9df4"/><path d="M765 126.800l-.6 5.200-4.400-1z" fill="#e0404e"/>
<use href="#dd" x="779" y="127"/>
<!-- pie -->
<circle cx="810" cy="128.800" r="9.200" fill="#f4f4f4" stroke="#4c4c4c" stroke-width="1.300"/><path d="M810 128.800v-9.200a9.200 9.200 0 0 1 9.200 9.200z" fill="#4c4c4c"/>
<use href="#dd" x="833" y="127"/>
<rect x="847" y="114" width="1" height="30" fill="#cdcdcd"/>
<g id="hex3d"><path d="M871.700 115.200l12.400 7.200v13.800l-12.400 7-12.400-7v-13.800z" fill="#a9a9a9" stroke="#5e5e5e" stroke-width=".9"/><path d="M871.700 115.200l12.400 7.200v13.800l-5.400-3h-7z" fill="#8c8c8c"/><path d="M859.300 136.200l5.600-3.200h13.800l5.400 3.200-12.400 7z" fill="#d6d6d6" stroke="#5e5e5e" stroke-width=".7"/><path d="M871.700 115.200v18" stroke="#6a6a6a" stroke-width=".8"/>
<rect x="864.200" y="124" width="5" height="11.600" fill="#d9434f"/><rect x="872.500" y="128" width="4.600" height="7.600" fill="#2a96f0"/></g>
<g id="cubedot"><path d="M899.300 123.500l5.500-5.300h16.500v15.800l-5.500 5.500h-16.500z" fill="#fafafa" stroke="#555" stroke-width="1.100" stroke-linejoin="round"/><path d="M899.300 123.500h16.500v16M915.800 123.500l5.500-5.300" fill="none" stroke="#555" stroke-width="1.100"/>
<g fill="#e0404a"><rect x="907.500" y="119.200" width="1.400" height="1.400"/><rect x="910.500" y="119.200" width="1.400" height="1.400"/><rect x="907.500" y="122" width="1.400" height="1.400"/><rect x="910.500" y="122" width="1.400" height="1.400"/><rect x="908.200" y="132" width="1.500" height="1.500"/><rect x="911.200" y="132" width="1.500" height="1.500"/><rect x="908.200" y="135.200" width="1.500" height="1.500"/><rect x="911.200" y="135.200" width="1.500" height="1.500"/></g>
<g fill="none" stroke="#2a9df4" stroke-width="1.100" stroke-dasharray="1.300 1.100"><circle cx="903.300" cy="129" r="1.800"/><circle cx="917.300" cy="127.800" r="1.800"/></g></g>
<rect x="931" y="108" width="2" height="42" fill="#a6a6a6"/>
<use href="#hdl" x="937" y="113"/>
<!-- A wire -->
<g fill="none" stroke="#4a4a4a"><path d="M956.200 139c2.200-5.500 3.600-12 5-17 .8-2.600 3.400-2.600 4.200 0 1.400 5 2.800 11.500 5 17" stroke-width="2.200"/><path d="M963.300 120.500v18.500M958.300 133.500c3 .9 7 .9 10 0M959.800 128c2.200.7 4.800.7 7 0" stroke-width="1.100"/></g>
<!-- cube pill -->
<path d="M991 123.500l5.500-5.300h16.500v15.800l-5.500 5.500h-16.500z" fill="#fafafa" stroke="#484848" stroke-width="1.200" stroke-linejoin="round"/><path d="M991 123.500h16.500v16M1007.500 123.500l5.500-5.300" fill="none" stroke="#484848" stroke-width="1.200"/>
<path d="M997.500 133.500l5-7.500" stroke="#e0404e" stroke-width="5" stroke-linecap="round"/><path d="M1000.500 129l2.500-3.700" stroke="#2a96f0" stroke-width="5" stroke-linecap="round"/><path d="M998.800 131.600l3.400-5" stroke="#2a96f0" stroke-width="5" stroke-linecap="butt" opacity="0"/>
<!-- A blue -->
<path d="M1033.200 139c2.200-5.500 3.800-12 5.200-17 .8-2.600 3.400-2.600 4.200 0 1.400 5 3 11.500 5.200 17z" fill="#2a96f0" stroke="#3c3c3c" stroke-width="2" stroke-linejoin="round"/>
<path d="M1040.500 120.500v18.500M1035.300 133.500c3 .9 7.400.9 10.400 0M1036.900 128c2.200.7 5 .7 7.200 0" fill="none" stroke="#3c3c3c" stroke-width="1.100"/>
<rect x="1063" y="114" width="1" height="30" fill="#cdcdcd"/>
<use href="#hex3d" x="216" y="0"/>
<use href="#cubedot" x="216" y="0"/>
<rect x="1148" y="114" width="1" height="30" fill="#cdcdcd"/>
<rect x="1160.80" y="118.00" width="3.95" height="3.95" fill="#f5a623"/><rect x="1164.70" y="118.00" width="3.95" height="3.95" fill="#d9434f"/><rect x="1168.60" y="118.00" width="3.95" height="3.95" fill="#f5a623"/><rect x="1172.50" y="118.00" width="3.95" height="3.95" fill="#27ae60"/><rect x="1176.40" y="118.00" width="3.95" height="3.95" fill="#27ae60"/><rect x="1180.30" y="118.00" width="3.95" height="3.95" fill="#f2703a"/><rect x="1160.80" y="121.90" width="3.95" height="3.95" fill="#2a96f0"/><rect x="1164.70" y="121.90" width="3.95" height="3.95" fill="#f2703a"/><rect x="1168.60" y="121.90" width="3.95" height="3.95" fill="#27ae60"/><rect x="1172.50" y="121.90" width="3.95" height="3.95" fill="#d9434f"/><rect x="1176.40" y="121.90" width="3.95" height="3.95" fill="#f5a623"/><rect x="1180.30" y="121.90" width="3.95" height="3.95" fill="#27ae60"/><rect x="1160.80" y="125.80" width="3.95" height="3.95" fill="#d9434f"/><rect x="1164.70" y="125.80" width="3.95" height="3.95" fill="#2a96f0"/><rect x="1168.60" y="125.80" width="3.95" height="3.95" fill="#f2703a"/><rect x="1172.50" y="125.80" width="3.95" height="3.95" fill="#f5a623"/><rect x="1176.40" y="125.80" width="3.95" height="3.95" fill="#d9434f"/><rect x="1180.30" y="125.80" width="3.95" height="3.95" fill="#2a96f0"/><rect x="1160.80" y="129.70" width="3.95" height="3.95" fill="#27ae60"/><rect x="1164.70" y="129.70" width="3.95" height="3.95" fill="#f5a623"/><rect x="1168.60" y="129.70" width="3.95" height="3.95" fill="#d9434f"/><rect x="1172.50" y="129.70" width="3.95" height="3.95" fill="#2a96f0"/><rect x="1176.40" y="129.70" width="3.95" height="3.95" fill="#f5a623"/><rect x="1180.30" y="129.70" width="3.95" height="3.95" fill="#2a96f0"/><rect x="1160.80" y="133.60" width="3.95" height="3.95" fill="#f2703a"/><rect x="1164.70" y="133.60" width="3.95" height="3.95" fill="#d9434f"/><rect x="1168.60" y="133.60" width="3.95" height="3.95" fill="#2a96f0"/><rect x="1172.50" y="133.60" width="3.95" height="3.95" fill="#f5a623"/><rect x="1176.40" y="133.60" width="3.95" height="3.95" fill="#27ae60"/><rect x="1180.30" y="133.60" width="3.95" height="3.95" fill="#d9434f"/><rect x="1160.80" y="137.50" width="3.95" height="3.95" fill="#2a96f0"/><rect x="1164.70" y="137.50" width="3.95" height="3.95" fill="#f5a623"/><rect x="1168.60" y="137.50" width="3.95" height="3.95" fill="#27ae60"/><rect x="1172.50" y="137.50" width="3.95" height="3.95" fill="#d9434f"/><rect x="1176.40" y="137.50" width="3.95" height="3.95" fill="#f5a623"/><rect x="1180.30" y="137.50" width="3.95" height="3.95" fill="#27ae60"/>
<rect x="1200.5" y="118.500" width="21.500" height="22" fill="#f6f6f6"/><circle cx="1211" cy="129.4" r="10" fill="none" stroke="#2a9df4" stroke-width="1.600" stroke-dasharray="3 12.700" stroke-dashoffset="1.500" transform="rotate(-90 1211 129.4)"/><circle cx="1211" cy="129.4" r="3.400" fill="#f0f020" stroke="#2a9df4" stroke-width="1.500"/><path d="M1201.2 122.8h6.400M1204.4 119.6v6.400" stroke="#e0404a" stroke-width="1.100"/><circle cx="1204.4" cy="122.8" r="1.700" fill="#f4e030" stroke="#e0404a" stroke-width=".8"/><path d="M1214.4 122.8h6.400M1217.6 119.6v6.400" stroke="#e0404a" stroke-width="1.100"/><circle cx="1217.6" cy="122.8" r="1.700" fill="#f4e030" stroke="#e0404a" stroke-width=".8"/><path d="M1201.2 136.0h6.400M1204.4 132.8v6.400" stroke="#e0404a" stroke-width="1.100"/><circle cx="1204.4" cy="136.0" r="1.700" fill="#f4e030" stroke="#e0404a" stroke-width=".8"/><path d="M1214.4 136.0h6.400M1217.6 132.8v6.400" stroke="#e0404a" stroke-width="1.100"/><circle cx="1217.6" cy="136.0" r="1.700" fill="#f4e030" stroke="#e0404a" stroke-width=".8"/>
<rect x="1239.00" y="118.00" width="3.78" height="3.88" fill="#b0b0b0"/><rect x="1242.73" y="118.00" width="3.78" height="3.88" fill="#8e8e8e"/><rect x="1246.47" y="118.00" width="3.78" height="3.88" fill="#9a9a9a"/><rect x="1250.20" y="118.00" width="3.78" height="3.88" fill="#bcbcbc"/><rect x="1253.93" y="118.00" width="3.78" height="3.88" fill="#a8a8a8"/><rect x="1257.67" y="118.00" width="3.78" height="3.88" fill="#9a9a9a"/><rect x="1239.00" y="121.83" width="3.78" height="3.88" fill="#9a9a9a"/><rect x="1242.73" y="121.83" width="3.78" height="3.88" fill="#a8a8a8"/><rect x="1246.47" y="121.83" width="3.78" height="3.88" fill="#a8a8a8"/><rect x="1250.20" y="121.83" width="3.78" height="3.88" fill="#8e8e8e"/><rect x="1253.93" y="121.83" width="3.78" height="3.88" fill="#c8c8c8"/><rect x="1257.67" y="121.83" width="3.78" height="3.88" fill="#a8a8a8"/><rect x="1239.00" y="125.67" width="3.78" height="3.88" fill="#8e8e8e"/><rect x="1242.73" y="125.67" width="3.78" height="3.88" fill="#9a9a9a"/><rect x="1246.47" y="125.67" width="3.78" height="3.88" fill="#c8c8c8"/><rect x="1250.20" y="125.67" width="3.78" height="3.88" fill="#9a9a9a"/><rect x="1253.93" y="125.67" width="3.78" height="3.88" fill="#bcbcbc"/><rect x="1257.67" y="125.67" width="3.78" height="3.88" fill="#8e8e8e"/><rect x="1239.00" y="129.50" width="3.78" height="3.88" fill="#a8a8a8"/><rect x="1242.73" y="129.50" width="3.78" height="3.88" fill="#a8a8a8"/><rect x="1246.47" y="129.50" width="3.78" height="3.88" fill="#8e8e8e"/><rect x="1250.20" y="129.50" width="3.78" height="3.88" fill="#a8a8a8"/><rect x="1253.93" y="129.50" width="3.78" height="3.88" fill="#a8a8a8"/><rect x="1257.67" y="129.50" width="3.78" height="3.88" fill="#9a9a9a"/><rect x="1239.00" y="133.34" width="3.78" height="3.88" fill="#9a9a9a"/><rect x="1242.73" y="133.34" width="3.78" height="3.88" fill="#8e8e8e"/><rect x="1246.47" y="133.34" width="3.78" height="3.88" fill="#a8a8a8"/><rect x="1250.20" y="133.34" width="3.78" height="3.88" fill="#c8c8c8"/><rect x="1253.93" y="133.34" width="3.78" height="3.88" fill="#9a9a9a"/><rect x="1257.67" y="133.34" width="3.78" height="3.88" fill="#a8a8a8"/><rect x="1239.00" y="137.17" width="3.78" height="3.88" fill="#a8a8a8"/><rect x="1242.73" y="137.17" width="3.78" height="3.88" fill="#bcbcbc"/><rect x="1246.47" y="137.17" width="3.78" height="3.88" fill="#9a9a9a"/><rect x="1250.20" y="137.17" width="3.78" height="3.88" fill="#8e8e8e"/><rect x="1253.93" y="137.17" width="3.78" height="3.88" fill="#bcbcbc"/><rect x="1257.67" y="137.17" width="3.78" height="3.88" fill="#9a9a9a"/>
<rect x="1271" y="108" width="1" height="42" fill="#a8a8a8"/><rect x="1272" y="108" width="1" height="42" fill="#d8d8d8"/>
<use href="#hdl" x="1277" y="113"/>
<!-- vertical bars -->
<path d="M1294 117l4.400 2.200v23l-4.400-3.400z" fill="#484848"/><path d="M1301.300 117l4.600 2v23.200l-4.600-3.200z" fill="#2a96f0"/><path d="M1309.600 117l4.800 2.600v22.600l-4.800-3.600z" fill="#484848"/>
<!-- horizontal bars -->
<path d="M1333.500 119h21.800l-3 4.300h-22.300z" fill="#484848"/><path d="M1333.500 127h21.800l-3 4.300h-22.300z" fill="#2a96f0"/><path d="M1333.500 134.700h21.800l-3 4.300h-22.300z" fill="#484848"/>
<!-- small circle -->
<circle cx="1381.400" cy="130" r="4.600" fill="#f6f6f6" stroke="#4a4a4a" stroke-width="1.100"/><circle cx="1381.800" cy="130.300" r="2.400" fill="#e0404a"/><path d="M1381.400 124v1.500M1381.400 134.500v1.500" stroke="#9a9a9a" stroke-width=".9"/>
<!-- monitor -->
<rect x="1409.600" y="119.600" width="21" height="13.800" fill="none" stroke="#4a4a4a" stroke-width="1.400"/><path d="M1417.500 122.500l5.200 4-5.200 4z" fill="#4a4a4a"/><path d="M1418 135.500h1.800l.6 3h-3zM1421.500 135.500h1.800l.6 3h-3z" fill="#4a4a4a"/><path d="M1416 138.800h8.500" stroke="#4a4a4a" stroke-width="1"/>
<rect x="1461" y="108" width="1" height="42" fill="#a8a8a8"/><rect x="1462" y="108" width="1" height="42" fill="#d8d8d8"/>
<use href="#hdl" x="1467" y="113"/>
<!-- table+ -->
<g fill="none" stroke="#505050" stroke-width="1.300"><path d="M1484.600 119.600h19v8M1484.600 119.600v18.800h12M1484.600 124.300h12M1484.600 129h19M1484.600 133.700h12M1490.500 119.600v18.800M1496.500 119.600v18.800"/></g>
<rect x="1497" y="120.300" width="6.600" height="8.700" fill="#2a96f0"/><path d="M1497.500 126l5-5.500M1498.500 129l5-5.500" stroke="#e8f4ff" stroke-width="1.300"/>
<path d="M1500.800 132.500v7M1497.300 136h7" stroke="#404040" stroke-width="1.400"/>
<!-- sigma col -->
<path d="M1532.500 121.500v-2.200h-10.800l7 9.600-7 9.600h10.800v-2.200" fill="none" stroke="#484848" stroke-width="1.300" stroke-linejoin="miter"/>
<g fill="none" stroke="#505050" stroke-width="1.300"><rect x="1536" y="119.600" width="5.600" height="18.800"/><path d="M1536 124.300h5.600M1536 129h5.600M1536 133.700h5.600"/></g>
<!-- sigma row -->
<path d="M1577.500 119.800v-2.200h-12l6.500 6.400-6.500 6.400h12v-2.200" fill="none" stroke="#484848" stroke-width="1.300"/>
<g fill="none" stroke="#505050" stroke-width="1.300"><rect x="1561.600" y="134.400" width="19" height="4.200"/><path d="M1566.400 134.400v4.200M1571.100 134.400v4.200M1575.900 134.400v4.200"/></g>
<rect x="0" y="149.500" width="1898" height="1" fill="#c4c4c4"/>
</svg>
<!-- TBSVG-END -->

<!-- COMBO VIEW -->
<div id="combo" class="a" style="left:0;top:150px;width:340px;height:600px">
  <div class="dockt" style="left:2px;top:1px;width:333px"><div class="t" style="top:2px">Combo View</div>
    <svg class="a" style="left:286px;top:6px" width="14" height="12" viewBox="0 0 14 12"><path d="M4.5 3.5V1h8v6H10M1.5 4.5h8v6.5h-8z M1.5 5.5h8 M4.5 2h8" fill="none" stroke="#333" stroke-width="1.6"/></svg>
    <svg class="a" style="left:313px;top:6px" width="12" height="12" viewBox="0 0 12 12"><path d="M1.5 1.5l9 9M10.5 1.5l-9 9" stroke="#222" stroke-width="2" fill="none"/></svg>
  </div>
  <div class="a" style="left:1px;top:54px;width:333px;height:542px;background:#fafafa;border:1px solid #e6e6e6"></div>
  <div class="tab un" style="left:66px;top:32px;width:58px;height:21px;line-height:20px">Tasks</div>
  <div class="frame" style="left:3px;top:54px;width:328px;height:249px;border-left-color:#fff"></div>
  <div class="tab sel" style="left:2px;top:29px;width:65px;height:25px;line-height:23px;background:#fafafa;border-color:#e9e9e9">Model</div>
  <!-- tree header -->
  <div class="t" style="left:10px;top:61px">Labels &amp; Attributes</div>
  <div class="vl" style="left:225px;top:56px;height:30px;background:#e0e0e0"></div>
  <div class="t" style="left:231px;top:61px">Description</div>
  <div class="t" style="left:9px;top:87px">Application</div>
  <svg class="a" style="left:11px;top:117px" width="12" height="8" viewBox="0 0 12 8"><path d="M1 1.5l5 5 5-5" fill="none" stroke="#222" stroke-width="1.6"/></svg>
  <svg class="a" style="left:36px;top:112px" width="17" height="19" viewBox="0 0 17 19"><rect x=".5" y=".5" width="16" height="18" rx="1.5" fill="#e8e8e8" stroke="#9a9a9a"/><circle cx="11" cy="6" r="3.6" fill="#e0141c"/><path d="M3 9l5-2 4 2v6l-5 2-4-2z" fill="#3f7cc4" stroke="#1d3f78" stroke-width=".8"/><path d="M3 9l4 2 5-2M7 11v6" stroke="#1d3f78" stroke-width=".8" fill="none"/></svg>
  <div class="t" style="left:61px;top:111px;font-weight:bold">Unnamed</div>
  <svg class="a" style="left:36px;top:142px" width="12" height="8" viewBox="0 0 12 8"><path d="M1 1.5l5 5 5-5" fill="none" stroke="#222" stroke-width="1.6"/></svg>
  <div class="t" style="left:61px;top:133px;font-family:'Liberation Serif',serif;font-size:26px;line-height:26px;height:26px;color:#1ccdd4;-webkit-text-stroke:.6px #0d7a80">S</div>
  <div class="t" style="left:86px;top:136px">Simulation</div>
  <div class="a" style="left:80px;top:158px;width:250px;height:25px;background:#d9d9d9;border-radius:2px 0 0 2px"></div>
  <svg class="a" style="left:83px;top:160px" width="22" height="22" viewBox="0 0 20 20"><path d="M10 1.5l7.5 4.2v8.6L10 18.5l-7.500-4.200V5.700z" fill="#dfe6ec" stroke="#7ba0bd" stroke-width="1.8"/><text x="10" y="14" font-family="Liberation Serif,serif" font-size="11" text-anchor="middle" fill="#7ba0bd">L</text></svg>
  <div class="t" style="left:111px;top:161px;color:#7a7a7a">SimulationPoints</div>
  <!-- h scrollbar -->
  <div class="a" style="left:5px;top:282px;width:325px;height:20px;background:#f0f0f0"></div>
  <div class="a" style="left:26px;top:289px;width:265px;height:6px;background:#8a8a8a"></div>
  <!-- property panel -->
  <div class="a" style="left:5px;top:309px;width:324px;height:259px;background:#fdfdfd;border:1px solid #ececec"></div>
  <div class="frame" style="left:6px;top:312px;width:320px;height:252px;border-top-color:#f4f4f4"></div>
  <div id="props" class="a" style="left:7px;top:313px;width:318px;height:250px;overflow:hidden">
    <div class="a" style="left:297px;top:0;width:21px;height:250px;background:#f0f0f0"></div>
    <div class="a" style="left:305px;top:21px;width:6px;height:75px;background:#8a8a8a"></div>
    <div class="t" style="left:5px;top:5px">Property</div>
    <div class="vl" style="left:124px;top:1px;height:29px;background:#e0e0e0"></div>
    <div class="t" style="left:130px;top:5px;letter-spacing:-0.2px">Value</div>
    <div class="a" style="left:0;top:30px;width:296px;height:26px;background:#a0a0a0;border-bottom:2px solid #c8c8c8;border-right:1px solid #8f8f8f"><div class="t" style="left:4px;top:3px;color:#fff;font-weight:bold;letter-spacing:-0.47px;font-size:14.400px">Base</div></div>
    <div class="a" style="left:25px;top:56px;width:271px;height:27px;background:#f5f5f5;border-bottom:1px solid #d0d0d0;border-right:1px solid #d0d0d0"><div class="t" style="left:4px;top:3px;letter-spacing:-0.38px">Label</div><div class="a" style="left:98px;top:0;width:2px;height:27px;background:#d8d8d8"></div><div class="t" style="left:104px;top:3px">SimulationPoints</div></div>
    <div class="a" style="left:0;top:83px;width:296px;height:25px;background:#a0a0a0;border-bottom:2px solid #c8c8c8;border-right:1px solid #8f8f8f"><div class="t" style="left:4px;top:3px;color:#fff;font-weight:bold;letter-spacing:-0.1px;font-size:14.400px">Basic Data</div></div>
    <div class="a" style="left:25px;top:108px;width:271px;height:26px;background:#f5f5f5;border-bottom:1px solid #d0d0d0;border-right:1px solid #d0d0d0"><div class="t" style="left:4px;top:3px">Is Active</div><div class="a" style="left:98px;top:0;width:2px;height:26px;background:#d8d8d8"></div><div class="t" style="left:104px;top:3px;letter-spacing:-0.3px">false</div></div>
    <div class="a" style="left:25px;top:134px;width:271px;height:26px;background:#fff;border-bottom:1px solid #d0d0d0;border-right:1px solid #d0d0d0"><div class="t" style="left:4px;top:3px;letter-spacing:0.28px">Author</div><div class="a" style="left:98px;top:0;width:2px;height:26px;background:#d8d8d8"></div><div class="t" style="left:104px;top:3px;letter-spacing:-0.8px">LabRPS Team</div></div>
    <div class="a" style="left:25px;top:160px;width:271px;height:26px;background:#f5f5f5;border-bottom:1px solid #d0d0d0;border-right:1px solid #d0d0d0"><div class="t" style="left:4px;top:3px;letter-spacing:-0.17px">Version</div><div class="a" style="left:98px;top:0;width:2px;height:26px;background:#d8d8d8"></div><div class="t" style="left:104px;top:3px;letter-spacing:-0.4px">1.00</div></div>
    <div class="a" style="left:25px;top:186px;width:271px;height:27px;background:#fff;border-bottom:1px solid #d0d0d0;border-right:1px solid #d0d0d0"><div class="t" style="left:4px;top:3px;letter-spacing:-0.36px">APIVersion</div><div class="a" style="left:98px;top:0;width:2px;height:27px;background:#d8d8d8"></div><div class="t" style="left:104px;top:3px;letter-spacing:-0.5px">0.001</div></div>
    <div class="a" style="left:25px;top:213px;width:271px;height:26px;background:#f5f5f5;border-bottom:1px solid #d0d0d0;border-right:1px solid #d0d0d0"><div class="t" style="left:4px;top:3px;letter-spacing:-0.49px">Release Date</div><div class="a" style="left:98px;top:0;width:2px;height:26px;background:#d8d8d8"></div><div class="t" style="left:104px;top:3px">07/01/2021</div></div>
    <div class="a" style="left:25px;top:239px;width:271px;height:26px;background:#fff;border-bottom:1px solid #d0d0d0;border-right:1px solid #d0d0d0"><div class="t" style="left:4px;top:3px">Feature Type</div><div class="a" style="left:98px;top:0;width:2px;height:26px;background:#d8d8d8"></div><div class="t" style="left:104px;top:3px">General Distribution</div></div>
  </div>
  <div class="tab un" style="left:6px;top:567px;width:53px;height:22px;line-height:23px;letter-spacing:-.4px;padding-right:3px">View</div>
  <div class="tab sel" style="left:58px;top:565px;width:58px;height:27px;line-height:30px;background:#fafafa;border:1px solid #e4e4e4;border-top:none">Data</div>
</div>
<!-- CENTER -->
<div id="center" class="a" style="left:340px;top:150px;width:1215px;height:600px">
  <div class="frame" style="left:1px;top:1px;width:1210px;height:566px;border-color:#7e8390;border-top:none;border-left-color:#666a72"></div>
  <div class="a" style="left:2px;top:127px;width:18px;height:439px;background:#f0f0f0"></div>
  <svg class="a" style="left:29px;top:18px" width="14" height="19" viewBox="0 0 14 19"><text x=".8" y="7.400" font-family="Liberation Sans,sans-serif" font-size="9.500" font-weight="bold" font-style="italic" fill="#505050">1</text><path d="M2.400 12.600L10 6.100" stroke="#505050" stroke-width="1.500"/><text x="6" y="17.100" font-family="Liberation Sans,sans-serif" font-size="9.500" font-weight="bold" font-style="italic" fill="#505050">2</text></svg>
  <div class="t" style="left:51px;top:6.500px;letter-spacing:-0.5px">1[X]</div>
  <div class="hl" style="left:26px;top:43px;width:139px;background:#8fd6c0"></div>
  <div class="vl" style="left:169px;top:2px;height:50px;background:#e5e5e5"></div>
  <div class="a" style="left:170px;top:2px;width:150px;height:50px;background:#d9ebf9"></div>
  <svg class="a" style="left:179px;top:18px" width="14" height="19" viewBox="0 0 14 19"><text x=".8" y="7.400" font-family="Liberation Sans,sans-serif" font-size="9.500" font-weight="bold" font-style="italic" fill="#505050">1</text><path d="M2.400 12.600L10 6.100" stroke="#505050" stroke-width="1.500"/><text x="6" y="17.100" font-family="Liberation Sans,sans-serif" font-size="9.500" font-weight="bold" font-style="italic" fill="#505050">2</text></svg>
  <div class="t" style="left:201px;top:6.500px;letter-spacing:-0.5px">2[Y]</div>
  <div class="hl" style="left:176px;top:43px;width:139px;background:#d8c4b4"></div>
  <div class="vl" style="left:319px;top:2px;height:50px;background:#e5e5e5"></div>
  <svg class="a" style="left:329px;top:18px" width="14" height="19" viewBox="0 0 14 19"><text x=".8" y="7.400" font-family="Liberation Sans,sans-serif" font-size="9.500" font-weight="bold" font-style="italic" fill="#505050">1</text><path d="M2.400 12.600L10 6.100" stroke="#505050" stroke-width="1.500"/><text x="6" y="17.100" font-family="Liberation Sans,sans-serif" font-size="9.500" font-weight="bold" font-style="italic" fill="#505050">2</text></svg>
  <div class="t" style="left:351px;top:6.500px;letter-spacing:-0.5px">3[Y]</div>
  <div class="hl" style="left:326px;top:43px;width:139px;background:#f5d2b3"></div>
  <div class="vl" style="left:469px;top:2px;height:50px;background:#e5e5e5"></div>
  <svg class="a" style="left:479px;top:18px" width="14" height="19" viewBox="0 0 14 19"><text x=".8" y="7.400" font-family="Liberation Sans,sans-serif" font-size="9.500" font-weight="bold" font-style="italic" fill="#505050">1</text><path d="M2.400 12.600L10 6.100" stroke="#505050" stroke-width="1.500"/><text x="6" y="17.100" font-family="Liberation Sans,sans-serif" font-size="9.500" font-weight="bold" font-style="italic" fill="#505050">2</text></svg>
  <div class="t" style="left:501px;top:6.500px;letter-spacing:-0.5px">4[Y]</div>
  <div class="hl" style="left:476px;top:43px;width:139px;background:#f5d2b3"></div>
  <div class="vl" style="left:619px;top:2px;height:50px;background:#e5e5e5"></div>
  <div class="t" style="left:7px;top:53px">1</div>
  <div class="a" style="left:20px;top:52px;width:150px;height:25px;border-right:1px solid #d4d4d4;border-bottom:1px solid #d4d4d4"><div class="t num" style="left:5px;top:0">1.00000000000000</div></div>
  <div class="a" style="left:170px;top:52px;width:150px;height:25px;border-right:1px solid #d4d4d4;border-bottom:1px solid #d4d4d4"><div class="t num" style="left:5px;top:0">0.00000000000000</div></div>
  <div class="a" style="left:320px;top:52px;width:150px;height:25px;border-right:1px solid #d4d4d4;border-bottom:1px solid #d4d4d4"><div class="t num" style="left:5px;top:0">0.00000000000000</div></div>
  <div class="a" style="left:470px;top:52px;width:150px;height:25px;border-right:1px solid #d4d4d4;border-bottom:1px solid #d4d4d4"><div class="t num" style="left:5px;top:0">35.00000000000000</div></div>
  <div class="t" style="left:7px;top:78px">2</div>
  <div class="a" style="left:20px;top:77px;width:150px;height:25px;border-right:1px solid #d4d4d4;border-bottom:1px solid #d4d4d4"><div class="t num" style="left:5px;top:0">2.00000000000000</div></div>
  <div class="a" style="left:170px;top:77px;width:150px;height:25px;border-right:1px solid #d4d4d4;border-bottom:1px solid #d4d4d4"><div class="t num" style="left:5px;top:0">0.00000000000000</div></div>
  <div class="a" style="left:320px;top:77px;width:150px;height:25px;border-right:1px solid #d4d4d4;border-bottom:1px solid #d4d4d4"><div class="t num" style="left:5px;top:0">0.00000000000000</div></div>
  <div class="a" style="left:470px;top:77px;width:150px;height:25px;border-right:1px solid #d4d4d4;border-bottom:1px solid #d4d4d4"><div class="t num" style="left:5px;top:0">40.00000000000000</div></div>
  <div class="t" style="left:7px;top:103px">3</div>
  <div class="a" style="left:20px;top:102px;width:150px;height:25px;border-right:1px solid #d4d4d4;border-bottom:1px solid #d4d4d4"><div class="t num" style="left:5px;top:0">3.00000000000000</div></div>
  <div class="a" style="left:170px;top:102px;width:150px;height:25px;border-right:1px solid #d4d4d4;border-bottom:1px solid #d4d4d4"><div class="t num" style="left:5px;top:0">0.00000000000000</div></div>
  <div class="a" style="left:320px;top:102px;width:150px;height:25px;border-right:1px solid #d4d4d4;border-bottom:1px solid #d4d4d4"><div class="t num" style="left:5px;top:0">0.00000000000000</div></div>
  <div class="a" style="left:470px;top:102px;width:150px;height:25px;border-right:1px solid #d4d4d4;border-bottom:1px solid #d4d4d4"><div class="t num" style="left:5px;top:0">140.00000000000000</div></div>

  <svg class="a" style="left:1184px;top:78px" width="22" height="24" viewBox="1524 228 22 24"><path d="M1539.800 233.200L1528.400 239.800l11.400 6.600z" fill="#4a4a4a" stroke="#4a4a4a" stroke-width="4.400" stroke-linejoin="round"/><path d="M1538.200 235.500l-6.800 4.400 6.800 4.400" fill="none" stroke="#ededed" stroke-width="1.400"/></svg>
  <div class="vl" style="left:20px;top:2px;height:125px;background:#e4e4e4"></div>
  <!-- mdi tabs -->
  <div class="a" style="left:5px;top:567px;width:131px;height:26px;background:#f0f0f0;border:1px solid #dedede;border-top:none"></div>
  <div class="a" style="left:136px;top:567px;width:109px;height:29px;background:#f8f8f8;border:1px solid #e4e4e4;border-top:none"></div>
  <svg class="a" style="left:16px;top:570px" width="19" height="19" viewBox="0 0 19 19"><rect width="19" height="19" rx="2" fill="#33485a"/><text x="9.500" y="14" text-anchor="middle" font-family="Liberation Sans,sans-serif" font-size="12" font-weight="bold" fill="#e8452c">(π)</text></svg>
  <div class="t" style="left:41px;top:570px;font-size:12.300px;letter-spacing:.15px">Start page</div>
  <svg class="a" style="left:104px;top:572px" width="17" height="17" viewBox="0 0 17 17"><rect x=".5" y=".5" width="16" height="16" rx="2" fill="#c8c8c8" stroke="#a8a8a8"/><path d="M5 5l7 7M12 5l-7 7" stroke="#fff" stroke-width="2.2"/></svg>
  <svg class="a" style="left:156px;top:573px" width="16" height="16" viewBox="0 0 16 16"><rect x=".75" y=".75" width="14.500" height="14.500" fill="#fff" stroke="#444" stroke-width="1.500"/><path d="M.75 5.500h14.500M.75 10.500h14.500M5.500 .75v14.500M10.500 .75v14.500" stroke="#444" stroke-width="1.300"/><rect x="1" y="1" width="4.500" height="4.500" fill="#2f8fe6"/></svg>
  <div class="t" style="left:178px;top:572px;font-size:12.300px;letter-spacing:.2px">table</div>
  <svg class="a" style="left:211px;top:572px" width="18" height="18" viewBox="0 0 18 18"><rect x=".75" y=".75" width="16.500" height="16.500" rx="2.500" fill="#e0452f" stroke="#b52a18" stroke-width="1.500"/><path d="M5.500 5.500l7 7M12.500 5.500l-7 7" stroke="#fff" stroke-width="2.400"/></svg>
</div>
<!-- RIGHT -->
<div id="right" class="a" style="left:1555px;top:150px;width:343px;height:600px">
  <div class="dockt" style="left:1px;top:1px;width:343px"><div class="t" style="top:2px;left:5px;letter-spacing:0.24px">Plot property</div>
    <svg class="a" style="left:294px;top:5px" width="14" height="12" viewBox="0 0 14 12"><path d="M4.5 3.5V1h8v6H10M1.5 4.5h8v6.5h-8z M1.5 5.5h8 M4.5 2h8" fill="none" stroke="#333" stroke-width="1.6"/></svg>
    <svg class="a" style="left:321px;top:5px" width="12" height="12" viewBox="0 0 12 12"><path d="M1.5 1.5l9 9M10.5 1.5l-9 9" stroke="#222" stroke-width="2" fill="none"/></svg>
  </div>
  <div class="a" style="left:12px;top:39px;width:320px;height:270px;background:#fff"></div>
  <svg class="a" style="left:19px;top:46px" width="16" height="16" viewBox="0 0 16 16"><rect x=".75" y=".75" width="14.500" height="14.500" fill="#fff" stroke="#444" stroke-width="1.500"/><path d="M.75 5.500h14.500M.75 10.500h14.500M5.500 .75v14.500M10.500 .75v14.500" stroke="#444" stroke-width="1.300"/><rect x="1" y="1" width="4.500" height="4.500" fill="#2f8fe6"/></svg>
  <div class="t" style="left:42px;top:44px;letter-spacing:.24px">table</div>
  <svg class="a" style="left:43px;top:74px" width="16" height="16" viewBox="0 0 16 16"><rect x=".5" y=".5" width="15" height="15" fill="#fff" stroke="#666"/><path d="M.5 5h15M.5 10.500h15M5.500 .5v15M10.500 .5v15" stroke="#999" stroke-width="1" stroke-dasharray="1.500 1"/><path d="M3 6.500h10v2.500h-10z" fill="#555"/></svg>
  <div class="t" style="left:69px;top:72px;letter-spacing:0.28px">Window</div>
  <svg class="a" style="left:43px;top:99px" width="16" height="16" viewBox="0 0 16 16"><path d="M1.500 1.500h6v4h-6M7.500 5.500v9h-6v-3h6M7.500 8.500h7v-3h-7" fill="none" stroke="#666" stroke-width="1.100"/></svg>
  <div class="t" style="left:69px;top:97px;letter-spacing:-0.5px">Rows x Cols</div>
  <div class="frame" style="left:12px;top:316px;width:320px;height:269px;border-top:none"></div>
  <div class="t" style="left:18px;top:322px">Property</div>
  <div class="vl" style="left:171px;top:317px;height:30px;background:#e0e0e0;width:2px"></div>
  <div class="t" style="left:177px;top:322px;letter-spacing:-0.2px">Value</div>
</div>
<!-- CONSOLE -->
<div id="console" class="a" style="left:0;top:750px;width:1898px;height:247px">
  <div class="dockt" style="left:2px;top:2px;width:1896px;height:25px;border-top:2px solid #b6b6b6"><div class="t" style="top:2px">Python console</div>
    <svg class="a" style="left:1847px;top:5px" width="14" height="12" viewBox="0 0 14 12"><path d="M4.5 3.5V1h8v6H10M1.5 4.5h8v6.5h-8z M1.5 5.5h8 M4.5 2h8" fill="none" stroke="#333" stroke-width="1.6"/></svg>
    <svg class="a" style="left:1874px;top:5px" width="12" height="12" viewBox="0 0 12 12"><path d="M1.5 1.5l9 9M10.5 1.5l-9 9" stroke="#222" stroke-width="2" fill="none"/></svg>
  </div>
  <div class="a" style="left:3px;top:31px;width:1874px;height:158px;background:#fff"></div>
  <div class="a" style="left:3px;top:189px;width:1895px;height:1px;background:#0f70c7"></div>
  <div class="con" style="top:31px"><span class="g pr">&gt;&gt;&gt; </span><span class="gr" style="letter-spacing:.27px">### End command Std_Workbench</span></div>
  <div class="con" style="top:51px"><span class="g pr">&gt;&gt;&gt; </span>Gui<span class="g">.</span>runCommand<span class="g">(</span><span class="r">'Std_DlgPreferences'</span><span class="g">,</span><span class="b">0</span><span class="g">)</span></div>
  <div class="con" style="top:71px"><span class="g pr">&gt;&gt;&gt; </span>Gui<span class="g">.</span>runCommand<span class="g">(</span><span class="r">'Std_DlgCustomize'</span><span class="g">,</span><span class="b">0</span><span class="g">)</span></div>
  <div class="con" style="top:91px"><span class="g pr">&gt;&gt;&gt; </span>Gui<span class="g">.</span>runCommand<span class="g">(</span><span class="r">'Std_AddonMgr'</span><span class="g">,</span><span class="b">0</span><span class="g">)</span></div>
  <div class="con" style="top:111px"><span class="g pr">&gt;&gt;&gt; </span><span class="gr" style="letter-spacing:.02px"># Gui.Selection.addSelection('Unnamed','SimulationPoints')</span></div>
  <div class="con" style="top:131px"><span class="g pr">&gt;&gt;&gt; </span>Gui<span class="g">.</span>runCommand<span class="g">(</span><span class="r">'Std_ViewDockUndockFullscreen'</span><span class="g">,</span><span class="b">2</span><span class="g">)</span></div>
  <div class="con" style="top:151px"><span class="g pr">&gt;&gt;&gt; </span></div>
  <div class="a" style="left:48px;top:152px;width:1px;height:18px;background:#000"></div>
  <div class="a" style="left:1884px;top:123px;width:6px;height:45px;background:#8a8a8a"></div>
  <div class="tab un" style="left:3px;top:191px;width:93px;height:21px;border-top:none;line-height:25px">Report view</div>
  <div class="tab sel" style="left:95px;top:190px;width:115px;height:25px;background:#fafafa;line-height:29px;border:1px solid #e4e4e4;border-top:none">Python console</div>
  <div class="vl" style="left:1718px;top:218px;height:25px;background:#d0d0d0"></div>
  <div class="vl" style="left:1875px;top:218px;height:25px;background:#d0d0d0"></div>
  <svg class="a" style="left:1883px;top:232px" width="13" height="13" viewBox="0 0 13 13"><g fill="#b8b8b8"><rect x="9" y="1" width="2" height="2"/><rect x="5" y="5" width="2" height="2"/><rect x="9" y="5" width="2" height="2"/><rect x="1" y="9" width="2" height="2"/><rect x="5" y="9" width="2" height="2"/><rect x="9" y="9" width="2" height="2"/></g></svg>
</div>
<div id="edgeL" class="a"></div><div id="edgeB" class="a"></div>
</body>
</html>
